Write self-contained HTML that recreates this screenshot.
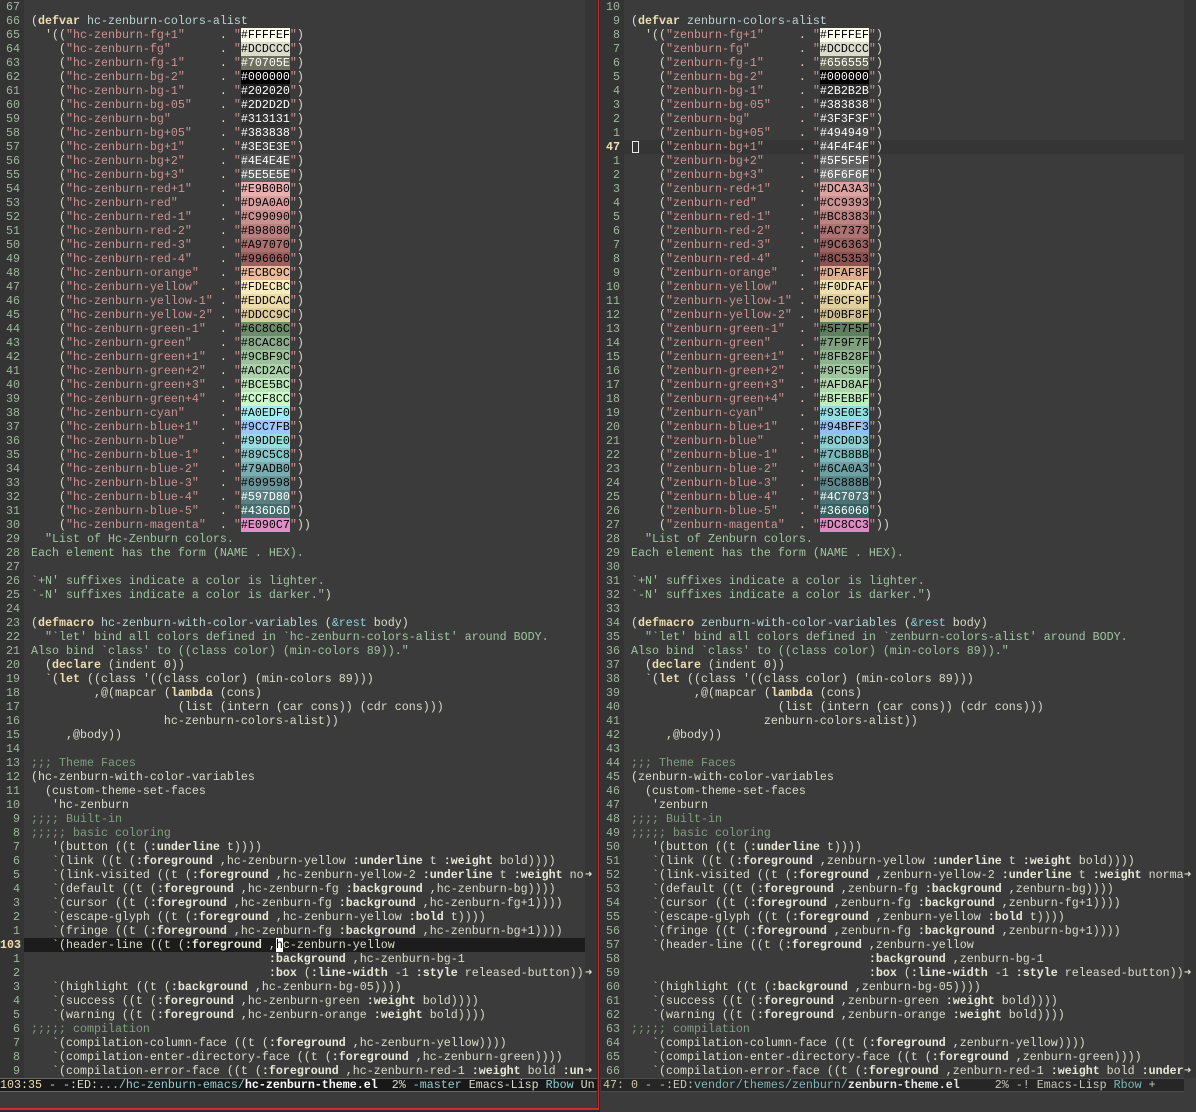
<!DOCTYPE html>
<html><head><meta charset="utf-8">
<style>
html,body{margin:0;padding:0;background:#3b3b3b;width:1196px;height:1112px;overflow:hidden}
body{position:relative;font-family:"Liberation Mono",monospace;font-size:11.667px;color:#dcdccc}
.pane{position:absolute;top:0;height:1078px;overflow:hidden}
.gut{position:absolute;top:0;width:24px;height:1078px;background:#343434}
.gut div{height:14px;line-height:14px;text-align:right;padding-right:4px;color:#9fb89f}
.gut .cur{color:#f0dfaf;font-weight:bold}
.txt{position:absolute;top:0;height:1078px;background:#3b3b3b;overflow:hidden}
.txt pre{margin:0;font:inherit;line-height:14px;white-space:pre;padding-left:7px}
.fr{position:absolute;top:0;width:12px;height:1078px;background:#353535}
.k{color:#f0dfaf;font-weight:bold}
.b{font-weight:bold;color:#e8e8d8}
.s{color:#cc9393}
.d{color:#9fc59f}
.c{color:#7f9f7f}
.v{color:#b8d4d4}
.f{color:#8cd0d3}
i{font-style:normal}
.hl{position:absolute;left:0;right:0;height:14px;background:#1c1c1c}
.hl2{position:absolute;left:0;right:0;height:14px;background:#353535}
.ar{position:absolute;color:#dcdccc;font-weight:bold;font-size:12px;line-height:14px}
.ml{position:absolute;top:1078px;height:14px;line-height:14px;white-space:pre;box-sizing:border-box}
</style></head><body>

<div class="pane" style="left:0;width:597px">
<div class="gut" style="left:0">
<div>67</div><div>66</div><div>65</div><div>64</div><div>63</div><div>62</div><div>61</div><div>60</div><div>59</div><div>58</div><div>57</div><div>56</div><div>55</div><div>54</div><div>53</div><div>52</div><div>51</div><div>50</div><div>49</div><div>48</div><div>47</div><div>46</div><div>45</div><div>44</div><div>43</div><div>42</div><div>41</div><div>40</div><div>39</div><div>38</div><div>37</div><div>36</div><div>35</div><div>34</div><div>33</div><div>32</div><div>31</div><div>30</div><div>29</div><div>28</div><div>27</div><div>26</div><div>25</div><div>24</div><div>23</div><div>22</div><div>21</div><div>20</div><div>19</div><div>18</div><div>17</div><div>16</div><div>15</div><div>14</div><div>13</div><div>12</div><div>11</div><div>10</div><div>9</div><div>8</div><div>7</div><div>6</div><div>5</div><div>4</div><div>3</div><div>2</div><div>1</div><div class="cur">103</div><div>1</div><div>2</div><div>3</div><div>4</div><div>5</div><div>6</div><div>7</div><div>8</div><div>9</div>
</div>
<div class="txt" style="left:24px;width:561px">
<div class="hl" style="top:938px"></div>
<pre style="position:relative">

(<span class="k">defvar</span> <span class="v">hc-zenburn-colors-alist</span>
  '((<span class="s">"hc-zenburn-fg+1"</span>     . <span class="s">"</span><i style="background:#FFFFEF;color:#000">#FFFFEF</i><span class="s">"</span>)
    (<span class="s">"hc-zenburn-fg"</span>       . <span class="s">"</span><i style="background:#DCDCCC;color:#000">#DCDCCC</i><span class="s">"</span>)
    (<span class="s">"hc-zenburn-fg-1"</span>     . <span class="s">"</span><i style="background:#70705E;color:#fff">#70705E</i><span class="s">"</span>)
    (<span class="s">"hc-zenburn-bg-2"</span>     . <span class="s">"</span><i style="background:#000000;color:#fff">#000000</i><span class="s">"</span>)
    (<span class="s">"hc-zenburn-bg-1"</span>     . <span class="s">"</span><i style="background:#202020;color:#fff">#202020</i><span class="s">"</span>)
    (<span class="s">"hc-zenburn-bg-05"</span>    . <span class="s">"</span><i style="background:#2D2D2D;color:#fff">#2D2D2D</i><span class="s">"</span>)
    (<span class="s">"hc-zenburn-bg"</span>       . <span class="s">"</span><i style="background:#313131;color:#fff">#313131</i><span class="s">"</span>)
    (<span class="s">"hc-zenburn-bg+05"</span>    . <span class="s">"</span><i style="background:#383838;color:#fff">#383838</i><span class="s">"</span>)
    (<span class="s">"hc-zenburn-bg+1"</span>     . <span class="s">"</span><i style="background:#3E3E3E;color:#fff">#3E3E3E</i><span class="s">"</span>)
    (<span class="s">"hc-zenburn-bg+2"</span>     . <span class="s">"</span><i style="background:#4E4E4E;color:#fff">#4E4E4E</i><span class="s">"</span>)
    (<span class="s">"hc-zenburn-bg+3"</span>     . <span class="s">"</span><i style="background:#5E5E5E;color:#fff">#5E5E5E</i><span class="s">"</span>)
    (<span class="s">"hc-zenburn-red+1"</span>    . <span class="s">"</span><i style="background:#E9B0B0;color:#000">#E9B0B0</i><span class="s">"</span>)
    (<span class="s">"hc-zenburn-red"</span>      . <span class="s">"</span><i style="background:#D9A0A0;color:#000">#D9A0A0</i><span class="s">"</span>)
    (<span class="s">"hc-zenburn-red-1"</span>    . <span class="s">"</span><i style="background:#C99090;color:#000">#C99090</i><span class="s">"</span>)
    (<span class="s">"hc-zenburn-red-2"</span>    . <span class="s">"</span><i style="background:#B98080;color:#000">#B98080</i><span class="s">"</span>)
    (<span class="s">"hc-zenburn-red-3"</span>    . <span class="s">"</span><i style="background:#A97070;color:#000">#A97070</i><span class="s">"</span>)
    (<span class="s">"hc-zenburn-red-4"</span>    . <span class="s">"</span><i style="background:#996060;color:#000">#996060</i><span class="s">"</span>)
    (<span class="s">"hc-zenburn-orange"</span>   . <span class="s">"</span><i style="background:#ECBC9C;color:#000">#ECBC9C</i><span class="s">"</span>)
    (<span class="s">"hc-zenburn-yellow"</span>   . <span class="s">"</span><i style="background:#FDECBC;color:#000">#FDECBC</i><span class="s">"</span>)
    (<span class="s">"hc-zenburn-yellow-1"</span> . <span class="s">"</span><i style="background:#EDDCAC;color:#000">#EDDCAC</i><span class="s">"</span>)
    (<span class="s">"hc-zenburn-yellow-2"</span> . <span class="s">"</span><i style="background:#DDCC9C;color:#000">#DDCC9C</i><span class="s">"</span>)
    (<span class="s">"hc-zenburn-green-1"</span>  . <span class="s">"</span><i style="background:#6C8C6C;color:#000">#6C8C6C</i><span class="s">"</span>)
    (<span class="s">"hc-zenburn-green"</span>    . <span class="s">"</span><i style="background:#8CAC8C;color:#000">#8CAC8C</i><span class="s">"</span>)
    (<span class="s">"hc-zenburn-green+1"</span>  . <span class="s">"</span><i style="background:#9CBF9C;color:#000">#9CBF9C</i><span class="s">"</span>)
    (<span class="s">"hc-zenburn-green+2"</span>  . <span class="s">"</span><i style="background:#ACD2AC;color:#000">#ACD2AC</i><span class="s">"</span>)
    (<span class="s">"hc-zenburn-green+3"</span>  . <span class="s">"</span><i style="background:#BCE5BC;color:#000">#BCE5BC</i><span class="s">"</span>)
    (<span class="s">"hc-zenburn-green+4"</span>  . <span class="s">"</span><i style="background:#CCF8CC;color:#000">#CCF8CC</i><span class="s">"</span>)
    (<span class="s">"hc-zenburn-cyan"</span>     . <span class="s">"</span><i style="background:#A0EDF0;color:#000">#A0EDF0</i><span class="s">"</span>)
    (<span class="s">"hc-zenburn-blue+1"</span>   . <span class="s">"</span><i style="background:#9CC7FB;color:#000">#9CC7FB</i><span class="s">"</span>)
    (<span class="s">"hc-zenburn-blue"</span>     . <span class="s">"</span><i style="background:#99DDE0;color:#000">#99DDE0</i><span class="s">"</span>)
    (<span class="s">"hc-zenburn-blue-1"</span>   . <span class="s">"</span><i style="background:#89C5C8;color:#000">#89C5C8</i><span class="s">"</span>)
    (<span class="s">"hc-zenburn-blue-2"</span>   . <span class="s">"</span><i style="background:#79ADB0;color:#000">#79ADB0</i><span class="s">"</span>)
    (<span class="s">"hc-zenburn-blue-3"</span>   . <span class="s">"</span><i style="background:#699598;color:#000">#699598</i><span class="s">"</span>)
    (<span class="s">"hc-zenburn-blue-4"</span>   . <span class="s">"</span><i style="background:#597D80;color:#fff">#597D80</i><span class="s">"</span>)
    (<span class="s">"hc-zenburn-blue-5"</span>   . <span class="s">"</span><i style="background:#436D6D;color:#fff">#436D6D</i><span class="s">"</span>)
    (<span class="s">"hc-zenburn-magenta"</span>  . <span class="s">"</span><i style="background:#E090C7;color:#000">#E090C7</i><span class="s">"</span>))
<span class="d">  "List of Hc-Zenburn colors.
Each element has the form (NAME . HEX).

`+N' suffixes indicate a color is lighter.
`-N' suffixes indicate a color is darker."</span>)

(<span class="k">defmacro</span> <span class="v">hc-zenburn-with-color-variables</span> (<span class="f">&amp;rest</span> body)
<span class="d">  "`let' bind all colors defined in `hc-zenburn-colors-alist' around BODY.
Also bind `class' to ((class color) (min-colors 89))."</span>
  (<span class="k">declare</span> (indent 0))
  `(<span class="k">let</span> ((class '((class color) (min-colors 89)))
         ,@(mapcar (<span class="k">lambda</span> (cons)
                     (list (intern (car cons)) (cdr cons)))
                   hc-zenburn-colors-alist))
     ,@body))

<span class="c">;;; Theme Faces</span>
(hc-zenburn-with-color-variables
  (custom-theme-set-faces
   'hc-zenburn
<span class="c">;;;; Built-in</span>
<span class="c">;;;;; basic coloring</span>
   '(button ((t (<span class="b">:underline</span> t))))
   `(link ((t (<span class="b">:foreground</span> ,hc-zenburn-yellow <span class="b">:underline</span> t <span class="b">:weight</span> bold))))
   `(link-visited ((t (<span class="b">:foreground</span> ,hc-zenburn-yellow-2 <span class="b">:underline</span> t <span class="b">:weight</span> no
   `(default ((t (<span class="b">:foreground</span> ,hc-zenburn-fg <span class="b">:background</span> ,hc-zenburn-bg))))
   `(cursor ((t (<span class="b">:foreground</span> ,hc-zenburn-fg <span class="b">:background</span> ,hc-zenburn-fg+1))))
   `(escape-glyph ((t (<span class="b">:foreground</span> ,hc-zenburn-yellow <span class="b">:bold</span> t))))
   `(fringe ((t (<span class="b">:foreground</span> ,hc-zenburn-fg <span class="b">:background</span> ,hc-zenburn-bg+1))))
   `(header-line ((t (<span class="b">:foreground</span> ,<i style="background:#fff;color:#000">h</i>c-zenburn-yellow
                                  <span class="b">:background</span> ,hc-zenburn-bg-1
                                  <span class="b">:box</span> (<span class="b">:line-width</span> -1 <span class="b">:style</span> released-button))
   `(highlight ((t (<span class="b">:background</span> ,hc-zenburn-bg-05))))
   `(success ((t (<span class="b">:foreground</span> ,hc-zenburn-green <span class="b">:weight</span> bold))))
   `(warning ((t (<span class="b">:foreground</span> ,hc-zenburn-orange <span class="b">:weight</span> bold))))
<span class="c">;;;;; compilation</span>
   `(compilation-column-face ((t (<span class="b">:foreground</span> ,hc-zenburn-yellow))))
   `(compilation-enter-directory-face ((t (<span class="b">:foreground</span> ,hc-zenburn-green))))
   `(compilation-error-face ((t (<span class="b">:foreground</span> ,hc-zenburn-red-1 <span class="b">:weight</span> bold <span class="b">:un</span>
</pre>
</div>
<div class="fr" style="left:585px"></div>
<div class="ar" style="left:585px;top:868px">&#10140;</div>
<div class="ar" style="left:585px;top:966px">&#10140;</div>
<div class="ar" style="left:585px;top:1064px">&#10140;</div>
</div>

<div style="position:absolute;left:597px;top:0;width:3px;height:1112px;background:#2a2a2a"></div>
<div style="position:absolute;left:598px;top:0;width:1px;height:1110px;background:#c83030"></div>
<div style="position:absolute;left:0;top:1108px;width:599px;height:2px;background:#c83030"></div>

<div class="pane" style="left:600px;width:596px">
<div class="gut" style="left:0">
<div>10</div><div>9</div><div>8</div><div>7</div><div>6</div><div>5</div><div>4</div><div>3</div><div>2</div><div>1</div><div class="cur">47</div><div>1</div><div>2</div><div>3</div><div>4</div><div>5</div><div>6</div><div>7</div><div>8</div><div>9</div><div>10</div><div>11</div><div>12</div><div>13</div><div>14</div><div>15</div><div>16</div><div>17</div><div>18</div><div>19</div><div>20</div><div>21</div><div>22</div><div>23</div><div>24</div><div>25</div><div>26</div><div>27</div><div>28</div><div>29</div><div>30</div><div>31</div><div>32</div><div>33</div><div>34</div><div>35</div><div>36</div><div>37</div><div>38</div><div>39</div><div>40</div><div>41</div><div>42</div><div>43</div><div>44</div><div>45</div><div>46</div><div>47</div><div>48</div><div>49</div><div>50</div><div>51</div><div>52</div><div>53</div><div>54</div><div>55</div><div>56</div><div>57</div><div>58</div><div>59</div><div>60</div><div>61</div><div>62</div><div>63</div><div>64</div><div>65</div><div>66</div>
</div>
<div class="txt" style="left:24px;width:560px">
<div class="hl2" style="top:140px"></div>
<div style="position:absolute;left:8px;top:141px;width:5px;height:10px;border:1px solid #e8e8e8"></div>
<pre style="position:relative">

(<span class="k">defvar</span> <span class="v">zenburn-colors-alist</span>
  '((<span class="s">"zenburn-fg+1"</span>     . <span class="s">"</span><i style="background:#FFFFEF;color:#000">#FFFFEF</i><span class="s">"</span>)
    (<span class="s">"zenburn-fg"</span>       . <span class="s">"</span><i style="background:#DCDCCC;color:#000">#DCDCCC</i><span class="s">"</span>)
    (<span class="s">"zenburn-fg-1"</span>     . <span class="s">"</span><i style="background:#656555;color:#fff">#656555</i><span class="s">"</span>)
    (<span class="s">"zenburn-bg-2"</span>     . <span class="s">"</span><i style="background:#000000;color:#fff">#000000</i><span class="s">"</span>)
    (<span class="s">"zenburn-bg-1"</span>     . <span class="s">"</span><i style="background:#2B2B2B;color:#fff">#2B2B2B</i><span class="s">"</span>)
    (<span class="s">"zenburn-bg-05"</span>    . <span class="s">"</span><i style="background:#383838;color:#fff">#383838</i><span class="s">"</span>)
    (<span class="s">"zenburn-bg"</span>       . <span class="s">"</span><i style="background:#3F3F3F;color:#fff">#3F3F3F</i><span class="s">"</span>)
    (<span class="s">"zenburn-bg+05"</span>    . <span class="s">"</span><i style="background:#494949;color:#fff">#494949</i><span class="s">"</span>)
    (<span class="s">"zenburn-bg+1"</span>     . <span class="s">"</span><i style="background:#4F4F4F;color:#fff">#4F4F4F</i><span class="s">"</span>)
    (<span class="s">"zenburn-bg+2"</span>     . <span class="s">"</span><i style="background:#5F5F5F;color:#fff">#5F5F5F</i><span class="s">"</span>)
    (<span class="s">"zenburn-bg+3"</span>     . <span class="s">"</span><i style="background:#6F6F6F;color:#fff">#6F6F6F</i><span class="s">"</span>)
    (<span class="s">"zenburn-red+1"</span>    . <span class="s">"</span><i style="background:#DCA3A3;color:#000">#DCA3A3</i><span class="s">"</span>)
    (<span class="s">"zenburn-red"</span>      . <span class="s">"</span><i style="background:#CC9393;color:#000">#CC9393</i><span class="s">"</span>)
    (<span class="s">"zenburn-red-1"</span>    . <span class="s">"</span><i style="background:#BC8383;color:#000">#BC8383</i><span class="s">"</span>)
    (<span class="s">"zenburn-red-2"</span>    . <span class="s">"</span><i style="background:#AC7373;color:#000">#AC7373</i><span class="s">"</span>)
    (<span class="s">"zenburn-red-3"</span>    . <span class="s">"</span><i style="background:#9C6363;color:#000">#9C6363</i><span class="s">"</span>)
    (<span class="s">"zenburn-red-4"</span>    . <span class="s">"</span><i style="background:#8C5353;color:#000">#8C5353</i><span class="s">"</span>)
    (<span class="s">"zenburn-orange"</span>   . <span class="s">"</span><i style="background:#DFAF8F;color:#000">#DFAF8F</i><span class="s">"</span>)
    (<span class="s">"zenburn-yellow"</span>   . <span class="s">"</span><i style="background:#F0DFAF;color:#000">#F0DFAF</i><span class="s">"</span>)
    (<span class="s">"zenburn-yellow-1"</span> . <span class="s">"</span><i style="background:#E0CF9F;color:#000">#E0CF9F</i><span class="s">"</span>)
    (<span class="s">"zenburn-yellow-2"</span> . <span class="s">"</span><i style="background:#D0BF8F;color:#000">#D0BF8F</i><span class="s">"</span>)
    (<span class="s">"zenburn-green-1"</span>  . <span class="s">"</span><i style="background:#5F7F5F;color:#000">#5F7F5F</i><span class="s">"</span>)
    (<span class="s">"zenburn-green"</span>    . <span class="s">"</span><i style="background:#7F9F7F;color:#000">#7F9F7F</i><span class="s">"</span>)
    (<span class="s">"zenburn-green+1"</span>  . <span class="s">"</span><i style="background:#8FB28F;color:#000">#8FB28F</i><span class="s">"</span>)
    (<span class="s">"zenburn-green+2"</span>  . <span class="s">"</span><i style="background:#9FC59F;color:#000">#9FC59F</i><span class="s">"</span>)
    (<span class="s">"zenburn-green+3"</span>  . <span class="s">"</span><i style="background:#AFD8AF;color:#000">#AFD8AF</i><span class="s">"</span>)
    (<span class="s">"zenburn-green+4"</span>  . <span class="s">"</span><i style="background:#BFEBBF;color:#000">#BFEBBF</i><span class="s">"</span>)
    (<span class="s">"zenburn-cyan"</span>     . <span class="s">"</span><i style="background:#93E0E3;color:#000">#93E0E3</i><span class="s">"</span>)
    (<span class="s">"zenburn-blue+1"</span>   . <span class="s">"</span><i style="background:#94BFF3;color:#000">#94BFF3</i><span class="s">"</span>)
    (<span class="s">"zenburn-blue"</span>     . <span class="s">"</span><i style="background:#8CD0D3;color:#000">#8CD0D3</i><span class="s">"</span>)
    (<span class="s">"zenburn-blue-1"</span>   . <span class="s">"</span><i style="background:#7CB8BB;color:#000">#7CB8BB</i><span class="s">"</span>)
    (<span class="s">"zenburn-blue-2"</span>   . <span class="s">"</span><i style="background:#6CA0A3;color:#000">#6CA0A3</i><span class="s">"</span>)
    (<span class="s">"zenburn-blue-3"</span>   . <span class="s">"</span><i style="background:#5C888B;color:#000">#5C888B</i><span class="s">"</span>)
    (<span class="s">"zenburn-blue-4"</span>   . <span class="s">"</span><i style="background:#4C7073;color:#fff">#4C7073</i><span class="s">"</span>)
    (<span class="s">"zenburn-blue-5"</span>   . <span class="s">"</span><i style="background:#366060;color:#fff">#366060</i><span class="s">"</span>)
    (<span class="s">"zenburn-magenta"</span>  . <span class="s">"</span><i style="background:#DC8CC3;color:#000">#DC8CC3</i><span class="s">"</span>))
<span class="d">  "List of Zenburn colors.
Each element has the form (NAME . HEX).

`+N' suffixes indicate a color is lighter.
`-N' suffixes indicate a color is darker."</span>)

(<span class="k">defmacro</span> <span class="v">zenburn-with-color-variables</span> (<span class="f">&amp;rest</span> body)
<span class="d">  "`let' bind all colors defined in `zenburn-colors-alist' around BODY.
Also bind `class' to ((class color) (min-colors 89))."</span>
  (<span class="k">declare</span> (indent 0))
  `(<span class="k">let</span> ((class '((class color) (min-colors 89)))
         ,@(mapcar (<span class="k">lambda</span> (cons)
                     (list (intern (car cons)) (cdr cons)))
                   zenburn-colors-alist))
     ,@body))

<span class="c">;;; Theme Faces</span>
(zenburn-with-color-variables
  (custom-theme-set-faces
   'zenburn
<span class="c">;;;; Built-in</span>
<span class="c">;;;;; basic coloring</span>
   '(button ((t (<span class="b">:underline</span> t))))
   `(link ((t (<span class="b">:foreground</span> ,zenburn-yellow <span class="b">:underline</span> t <span class="b">:weight</span> bold))))
   `(link-visited ((t (<span class="b">:foreground</span> ,zenburn-yellow-2 <span class="b">:underline</span> t <span class="b">:weight</span> norma
   `(default ((t (<span class="b">:foreground</span> ,zenburn-fg <span class="b">:background</span> ,zenburn-bg))))
   `(cursor ((t (<span class="b">:foreground</span> ,zenburn-fg <span class="b">:background</span> ,zenburn-fg+1))))
   `(escape-glyph ((t (<span class="b">:foreground</span> ,zenburn-yellow <span class="b">:bold</span> t))))
   `(fringe ((t (<span class="b">:foreground</span> ,zenburn-fg <span class="b">:background</span> ,zenburn-bg+1))))
   `(header-line ((t (<span class="b">:foreground</span> ,zenburn-yellow
                                  <span class="b">:background</span> ,zenburn-bg-1
                                  <span class="b">:box</span> (<span class="b">:line-width</span> -1 <span class="b">:style</span> released-button))
   `(highlight ((t (<span class="b">:background</span> ,zenburn-bg-05))))
   `(success ((t (<span class="b">:foreground</span> ,zenburn-green <span class="b">:weight</span> bold))))
   `(warning ((t (<span class="b">:foreground</span> ,zenburn-orange <span class="b">:weight</span> bold))))
<span class="c">;;;;; compilation</span>
   `(compilation-column-face ((t (<span class="b">:foreground</span> ,zenburn-yellow))))
   `(compilation-enter-directory-face ((t (<span class="b">:foreground</span> ,zenburn-green))))
   `(compilation-error-face ((t (<span class="b">:foreground</span> ,zenburn-red-1 <span class="b">:weight</span> bold <span class="b">:under</span>
</pre>
</div>
<div class="fr" style="left:584px"></div>
<div class="ar" style="left:584px;top:868px">&#10140;</div>
<div class="ar" style="left:584px;top:966px">&#10140;</div>
<div class="ar" style="left:584px;top:1064px">&#10140;</div>
</div>

<div class="ml" style="left:0;width:597px;background:#181818;border-top:1px solid #666;border-bottom:1px solid #666;line-height:12px;color:#dcdccc;overflow:hidden"><span style="color:#f0dfaf">103:35</span> - -:ED:<span style="color:#8cd0d3">.../hc-zenburn-emacs/</span><b style="color:#fff">hc-zenburn-theme.el</b>  2% <span style="color:#8cd0d3">-master</span> Emacs-Lisp <span style="color:#8cd0d3">Rbow</span> Un</div>
<div class="ml" style="left:601px;width:583px;background:#262626;border-top:1px solid #4a4a4a;border-bottom:1px solid #4a4a4a;line-height:12px;color:#c8c8b8;overflow:hidden;padding-left:2px"><span style="color:#d0c8a0">47: 0</span> - -:ED:<span style="color:#7cb8bb">vendor/themes/zenburn/</span><b style="color:#e8e8e8">zenburn-theme.el</b>     2% -! Emacs-Lisp <span style="color:#7cb8bb">Rbow</span> +</div>
<div style="position:absolute;left:0;top:1092px;width:585px;height:16px;background:#3b3b3b"></div>
<div style="position:absolute;left:601px;top:1092px;width:583px;height:20px;background:#3b3b3b"></div>
<div style="position:absolute;left:0;top:1110px;width:597px;height:2px;background:#2a2a2a"></div>
</body></html>
